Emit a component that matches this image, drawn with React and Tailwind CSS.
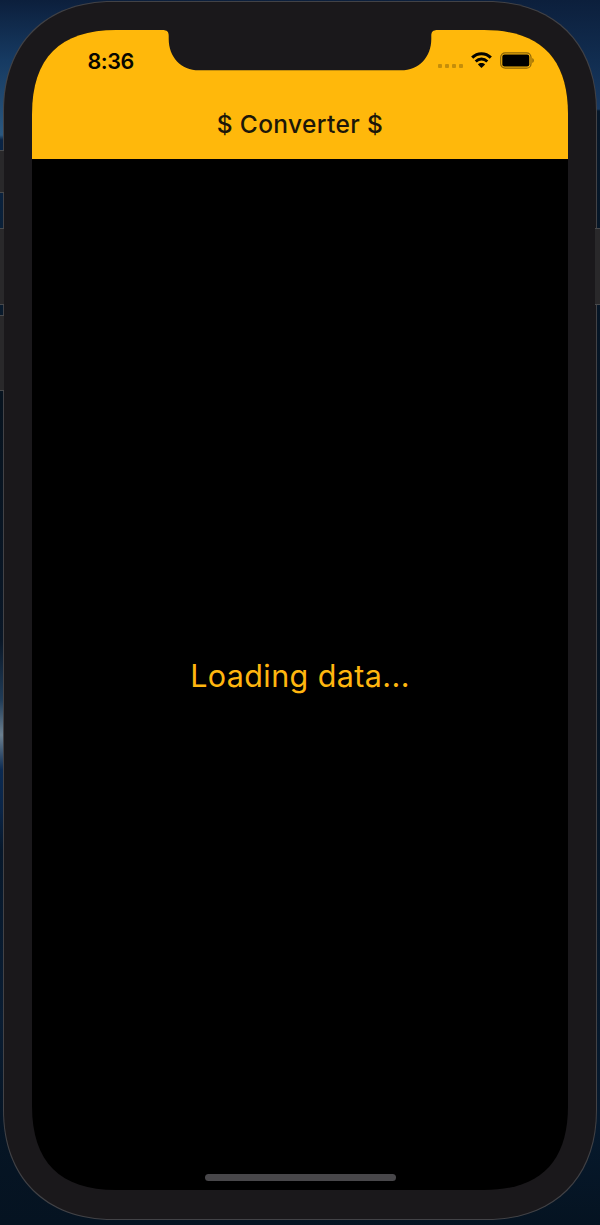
function Notch() {
  return (
    <svg className="absolute left-[130px] top-0" width="276" height="41" viewBox="0 0 276 41" aria-hidden="true">
      <path
        d="M0 0H276C270.500 0 269.300 2 269.300 6V9C269.300 27 257 40.300 239 40.300H37C19 40.300 6.700 27 6.700 9V6C6.700 2 5.500 0 0 0Z"
        fill="#1a181b"
      />
    </svg>
  );
}

function WifiIcon() {
  return (
    <svg width="22" height="17" viewBox="0 0 22 17" fill="none" aria-hidden="true">
      <path d="M1.200 6.700C6.500 1.500 14.500 1.500 19.800 6.700" stroke="#050400" strokeWidth="3.100" />
      <path d="M4.700 10.500C8.100 7.200 12.900 7.200 16.300 10.500" stroke="#050400" strokeWidth="2.900" />
      <path d="M10.500 17L6.900 13.400C8.900 11.600 12.100 11.600 14.100 13.400Z" fill="#050400" />
    </svg>
  );
}

function BatteryIcon() {
  return (
    <svg width="35" height="18" viewBox="0 0 35 18" aria-hidden="true">
      <rect x="0.700" y="0.800" width="30.300" height="15.400" rx="4.500" fill="none" stroke="#8b6407" strokeWidth="1.200" />
      <rect x="2.300" y="2.600" width="27" height="11.800" rx="2.200" fill="#000" />
      <path d="M32.300 6C34.300 6.700 34.300 10.200 32.300 10.900Z" fill="#8b6407" />
    </svg>
  );
}

function StatusBar() {
  return (
    <div className="flex h-[60px] items-start justify-between pl-[55px] pr-[33px]">
      <span className="mt-[17px] pl-[0.5px] text-[21.5px] font-semibold leading-[28px] tracking-[-0.4px] text-[#080600]">8:36</span>
      <div className="flex items-start">
        <div className="mr-[8px] mt-[34px] flex gap-[3px]">
          {[0, 1, 2, 3].map((dot) => (
            <span key={dot} className="size-[4px] rounded-[1px] bg-[#c58e0a]" />
          ))}
        </div>
        <div className="mr-[7px] mt-[21px]">
          <WifiIcon />
        </div>
        <div className="mt-[22px]">
          <BatteryIcon />
        </div>
      </div>
    </div>
  );
}

function SideButtons() {
  return (
    <>
      <div className="absolute left-0 top-[150px] h-[43px] w-[4px] border-y border-[#48494b] bg-[#29282a]" />
      <div className="absolute left-0 top-[228px] h-[77px] w-[4px] border-y border-[#48494b] bg-[#29282a]" />
      <div className="absolute left-0 top-[315px] h-[76px] w-[4px] border-y border-[#48494b] bg-[#29282a]" />
      <div className="absolute right-0 top-[228px] h-[77px] w-[5px] border-y border-[#48494b] bg-[#29282a]" />
    </>
  );
}

export default function App() {
  return (
    <div
      className="relative h-[1225px] w-[600px] overflow-hidden bg-[#051321] px-[3px] pt-[1px]"
      style={{ fontFamily: 'Inter, "Liberation Sans", sans-serif' }}
    >
      <div className="absolute left-0 top-0 h-[700px] w-[300px] bg-[linear-gradient(180deg,#0c1f3c_0px,#163a62_60px,#1e456c_90px,#2b5880_135px,#0a2445_140px,#0a2038_230px,#07131f_400px,#0a1727_640px,#203c58_700px)]" />
      <div className="absolute left-0 top-[700px] h-[525px] w-[300px] bg-[linear-gradient(180deg,#203c58_0px,#6b7f8f_35px,#0b2a52_70px,#0b2547_110px,#07182b_150px,#0a1d33_320px,#061525_420px,#051321_525px)]" />
      <div className="absolute right-0 top-0 h-[1225px] w-[300px] bg-[linear-gradient(180deg,#0c1f3c_0px,#112d50_60px,#183961_109px,#07182a_111px,#051321_600px,#071a2e_1120px,#051321_1225px)]" />

      <div className="relative h-[1219px] w-[594px] bg-[#424246] p-px [clip-path:path('M0_110C0_42_42_0_110_0H484C552_0_594_42_594_110V1109C594_1177_552_1219_484_1219H110C42_1219_0_1177_0_1109Z')]">
        <div className="h-[1217px] w-[592px] bg-[#1a181b] px-[28px] pt-[28px] [clip-path:path('M0_109C0_42_42_0_109_0H483C550_0_592_42_592_109V1108C592_1175_550_1217_483_1217H109C42_1217_0_1175_0_1108Z')]">
          <main className="relative flex h-[1160px] w-[536px] flex-col bg-black [clip-path:path('M0_84C0_28_28_0_84_0H452C508_0_536_28_536_84V1076C536_1132_508_1160_452_1160H84C28_1160_0_1132_0_1076Z')]">
            <header className="h-[129px] bg-[#ffb80b]">
              <StatusBar />
              <h1 className="mt-[18px] text-center text-[24.5px] font-medium leading-[33px] tracking-[0.38px] text-[#1c1709]">
                $ Converter $
              </h1>
            </header>
            <Notch />
            <div className="flex flex-1 items-center justify-center pt-[2px]">
              <p className="whitespace-nowrap text-[30.5px] leading-[40px] tracking-[0.4px] text-[#ffb60f]">Loading data...</p>
            </div>
            <div className="absolute bottom-[9px] left-[172.5px] h-[7px] w-[191.5px] rounded-full bg-[#48474a]" />
          </main>
        </div>
      </div>
      <SideButtons />
    </div>
  );
}
